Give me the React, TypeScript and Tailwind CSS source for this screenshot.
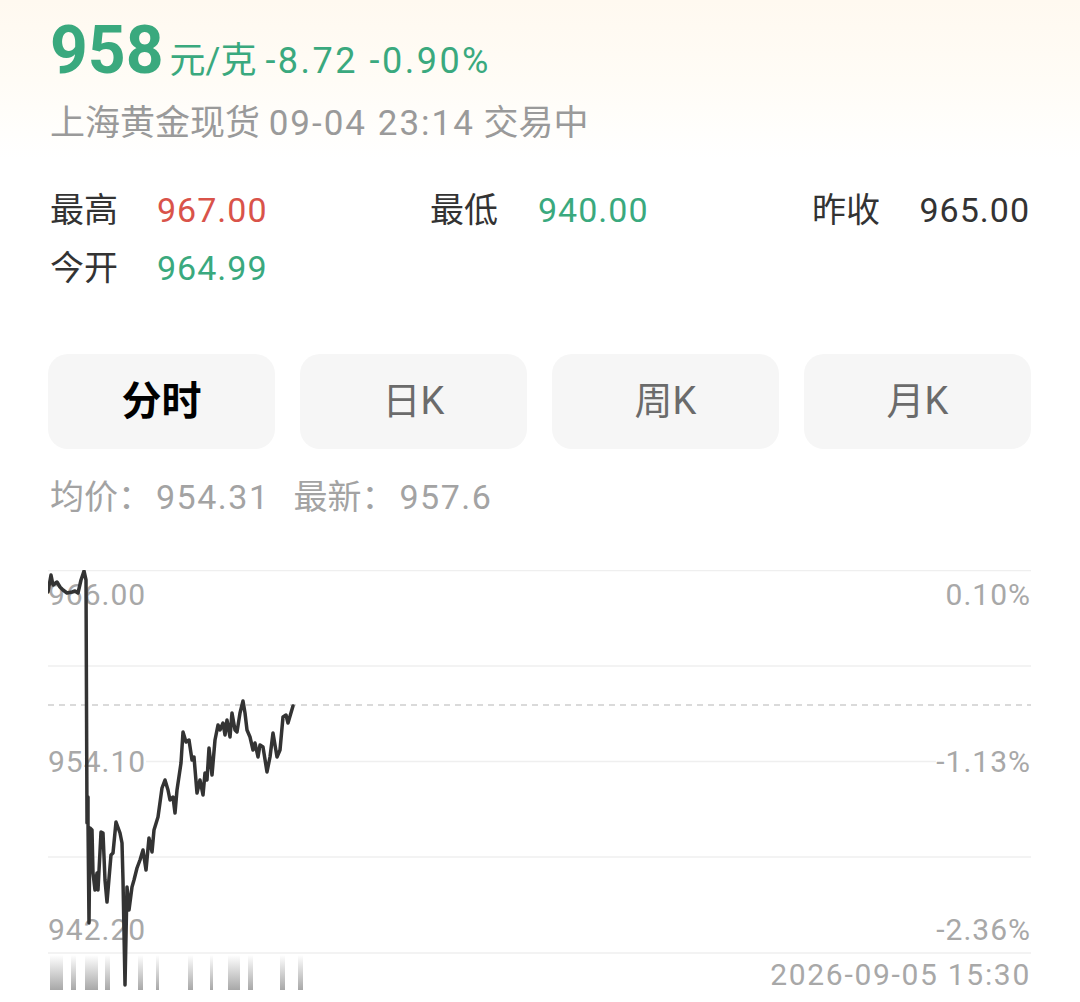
import React from "react";

const GREEN = "#3aa97e";

const pts: [number, number][] = [
  [48, 592], [51, 575], [53, 585], [57, 582], [60, 587], [63, 590], [67, 593], [72, 592],
  [75, 591], [78, 593], [81, 580], [84, 571], [86, 580], [87, 823], [88, 797], [88, 823],
  [89, 923], [90, 828], [92, 830], [93, 873], [95, 890], [97, 873], [98, 890], [101, 832],
  [103, 833], [105, 880], [107, 902], [111, 855], [113, 853], [116, 822], [120, 833],
  [122, 843], [123, 880], [125, 985], [127, 887], [129, 910], [132, 887], [134, 880],
  [137, 868], [140, 860], [143, 850], [146, 870], [149, 838], [152, 852], [154, 830],
  [158, 817], [162, 788], [165, 780], [168, 790], [170, 800], [173, 797], [175, 813],
  [177, 790], [181, 763], [183, 732], [186, 742], [189, 740], [192, 760], [194, 757],
  [197, 793], [200, 780], [203, 795], [205, 773], [207, 780], [209, 748], [212, 775],
  [215, 740], [218, 725], [220, 730], [223, 723], [225, 735], [227, 720], [230, 737],
  [232, 713], [235, 730], [237, 732], [240, 713], [243, 701], [245, 713], [247, 730],
  [250, 737], [253, 750], [255, 743], [258, 757], [260, 745], [263, 747], [267, 772],
  [270, 757], [273, 733], [277, 757], [280, 750], [283, 717], [286, 715], [288, 723],
  [293, 706],
];

const linePath = pts
  .map(([x, y], i) => `${i ? "L" : "M"}${x - 48} ${y - 570}`)
  .join(" ");

const bars: [number, number][] = [
  [50, 63], [71, 76], [85, 98], [105, 110], [138, 143], [156, 159], [188, 193],
  [210, 213], [228, 240], [248, 253], [280, 285], [298, 303],
];

const gridYs = [0.5, 96, 191.5, 287, 383];

export default function App() {
  return (
    <div className="w-[1080px] h-[1002px] overflow-hidden bg-white font-[Roboto,'Noto_Sans_CJK_SC',sans-serif]">
      {/* header */}
      <div className="h-[160px] px-[50px] bg-linear-to-b from-[#fff9f0] via-[#fffcf6] to-white">
        <div className="pt-[18px]">
          <div className="flex items-baseline leading-none h-[66px] whitespace-nowrap">
            <span className="text-[66px] font-bold" style={{ color: GREEN }}>958</span>
            <span className="ml-[6px] text-[36px]" style={{ color: GREEN }}>
              元/克 <span className="tracking-[2.5px]">-8.72 -0.90%</span>
            </span>
          </div>
        </div>
        <div className="mt-[20px] leading-[40px] text-[35px] text-[#9a9a9a] whitespace-nowrap">
          上海黄金现货 <span className="tracking-[2px]">09-04 23:14</span> 交易中
        </div>
      </div>

      {/* stats */}
      <div className="mt-[28px] px-[50px] text-[34px] leading-[44px] text-[#333]">
        <div className="grid grid-cols-[380px_382px_1fr]">
          <div className="flex">
            <span className="w-[107px]">最高</span>
            <span className="text-[#d9534a] tracking-[1px]">967.00</span>
          </div>
          <div className="flex">
            <span className="w-[108px]">最低</span>
            <span className="tracking-[1px]" style={{ color: GREEN }}>940.00</span>
          </div>
          <div className="flex justify-between">
            <span>昨收</span>
            <span className="tracking-[1px]">965.00</span>
          </div>
        </div>
        <div className="mt-[14px] flex">
          <span className="w-[107px]">今开</span>
          <span className="tracking-[1px]" style={{ color: GREEN }}>964.99</span>
        </div>
      </div>

      {/* tabs */}
      <div className="mt-[64px] pl-[48px] pr-[49px] grid grid-cols-4 gap-[25px]">
        <div className="h-[95px] rounded-[20px] bg-[#f6f6f6] flex items-center justify-center text-[40px] font-bold text-black">
          分时
        </div>
        <div className="h-[95px] rounded-[20px] bg-[#f6f6f6] flex items-center justify-center text-[38px] text-[#6b6b6b]">
          日K
        </div>
        <div className="h-[95px] rounded-[20px] bg-[#f6f6f6] flex items-center justify-center text-[38px] text-[#6b6b6b]">
          周K
        </div>
        <div className="h-[95px] rounded-[20px] bg-[#f6f6f6] flex items-center justify-center text-[38px] text-[#6b6b6b]">
          月K
        </div>
      </div>

      {/* avg line */}
      <div className="mt-[28px] px-[50px] leading-[40px] text-[34px] text-[#a3a3a3] flex whitespace-nowrap">
        <span>均价：<span className="ml-[4px] tracking-[1.5px]">954.31</span></span>
        <span className="ml-[24px]">最新：<span className="ml-[4px] tracking-[1.5px]">957.6</span></span>
      </div>

      {/* chart */}
      <div className="relative mt-[53px] ml-[48px] w-[983px] h-[432px]">
        <svg className="absolute inset-0" width="983" height="432">
          {gridYs.map((y) => (
            <line key={y} x1="0" x2="983" y1={y} y2={y} stroke="#efefef" strokeWidth="1.5" />
          ))}
        </svg>

        <div className="absolute left-0 top-[7px] leading-[36px] text-[30px] text-[#a8a8a8] bg-white tracking-[1px]">966.00</div>
        <div className="absolute left-0 top-[174px] leading-[36px] text-[30px] text-[#a8a8a8] bg-white tracking-[1px]">954.10</div>
        <div className="absolute left-0 top-[342px] leading-[36px] text-[30px] text-[#a8a8a8] bg-white tracking-[1px]">942.20</div>
        <div className="absolute right-0 top-[7px] leading-[36px] text-[30px] text-[#a8a8a8] bg-white tracking-[1px]">0.10%</div>
        <div className="absolute right-0 top-[174px] leading-[36px] text-[30px] text-[#a8a8a8] bg-white tracking-[1px]">-1.13%</div>
        <div className="absolute right-0 top-[342px] leading-[36px] text-[30px] text-[#a8a8a8] bg-white tracking-[1px]">-2.36%</div>
        <div className="absolute right-0 top-[387px] leading-[36px] text-[30px] text-[#a8a8a8] tracking-[1.7px]">2026-09-05 15:30</div>

        <svg className="absolute inset-0" width="983" height="432">
          <defs>
            <linearGradient id="vol" x1="0" y1="0" x2="0" y2="1">
              <stop offset="0" stopColor="#ffffff" stopOpacity="1" />
              <stop offset="1" stopColor="#a8a8a8" stopOpacity="1" />
            </linearGradient>
          </defs>
          {bars.map(([a, b]) => (
            <rect key={a} x={a - 48} y={385} width={b - a} height={35} fill="url(#vol)" />
          ))}
          <line x1="0" x2="983" y1="135" y2="135" stroke="#b5b5b5" strokeWidth="1" strokeDasharray="6 5" />
          <path d={linePath} fill="none" stroke="#333333" strokeWidth="3.5" strokeLinejoin="round" strokeLinecap="round" />
        </svg>
      </div>
    </div>
  );
}
